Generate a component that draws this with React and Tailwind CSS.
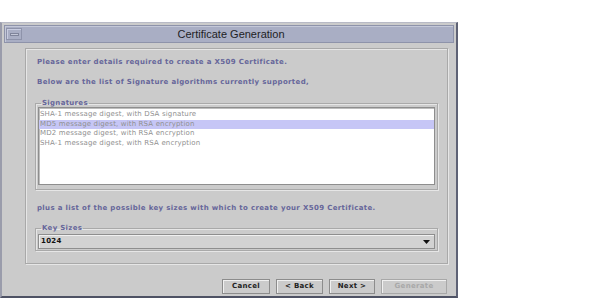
import React from "react";

function Group({ label, children, className }) {
  return (
    <fieldset className={"border border-[#a9a9a9] shadow-[inset_1px_1px_0_#e6e6e6,1px_1px_0_#e6e6e6] px-[2px] pb-[1px] " + className}>
      <legend className="ml-[3px] px-[1px] text-[7px] leading-[8px] font-bold text-[#66669a] tracking-[0.3px]">{label}</legend>
      {children}
    </fieldset>
  );
}

function Btn({ children, disabled, w }) {
  return (
    <div
      className={
        "h-[15px] flex items-center justify-center border border-[#8c8c8c] shadow-[inset_1px_1px_0_#f0f0f0] text-[7px] font-bold tracking-[0.3px] " +
        w +
        (disabled ? " text-[#a8a8a8] border-[#a8a8a8]" : " text-[#222]")
      }
    >
      {children}
    </div>
  );
}

export default function App() {
  const items = [
    "SHA-1 message digest, with DSA signature",
    "MD5 message digest, with RSA encryption",
    "MD2 message digest, with RSA encryption",
    "SHA-1 message digest, with RSA encryption",
  ];
  return (
    <div className="w-[610px] h-[301px] bg-white overflow-hidden font-['DejaVu_Sans',sans-serif]">
      <div className="mt-[22px] w-[458px] h-[276px] bg-[#cbcbcb] border-l-2 border-l-[#9a9cab] border-t border-t-[#b8bac6] border-r-2 border-r-[#5e6275] border-b-2 border-b-[#4e5264] flex flex-col px-[2px] pt-[2px]">
        <div className="relative h-[18px] bg-[#a9aec4] border border-[#8e93aa] shadow-[inset_1px_1px_0_#c4c8d8] flex items-center justify-center">
          <div className="absolute left-[1px] top-[2px] w-[16px] h-[12px] border border-[#8e93aa] shadow-[inset_1px_1px_0_#c8cce0] flex items-center justify-center">
            <div className="w-[9px] h-[3px] bg-[#c4c8d8] border border-[#7f849a]" />
          </div>
          <span className="font-['Liberation_Sans',sans-serif] text-[11px] text-[#1e1e24] pl-[4px]">Certificate Generation</span>
        </div>
        <div className="flex-1 flex flex-col pl-[21px] pr-[6px] pt-[5px]">
          <div className="h-[216px] border border-[#a9a9a9] shadow-[inset_1px_1px_0_#e6e6e6,1px_1px_0_#e6e6e6] flex flex-col px-[9px]">
            <div className="mt-[8px] text-[7px] leading-[10px] font-bold text-[#66669a] tracking-[0.35px] pl-[2px]">
              Please enter details required to create a X509 Certificate.
            </div>
            <div className="mt-[10px] text-[7px] leading-[10px] font-bold text-[#66669a] tracking-[0.35px] pl-[2px]">
              Below are the list of Signature algorithms currently supported,
            </div>
            <Group label="Signatures" className="mt-[12px] h-[91px]">
              <div className="h-[78px] bg-white border border-[#8e8e8e] shadow-[inset_1px_1px_0_#bdbdbd] pt-[2px]">
                {items.map((t, i) => (
                  <div
                    key={i}
                    className={
                      "h-[9.7px] leading-[9.7px] text-[7px] text-[#909090] pl-[1px] tracking-[0.15px] " +
                      (i === 1 ? "bg-[#c6c6f6]" : "")
                    }
                  >
                    {t}
                  </div>
                ))}
              </div>
            </Group>
            <div className="mt-[13px] text-[7px] leading-[10px] font-bold text-[#66669a] tracking-[0.35px] pl-[2px]">
              plus a list of the possible key sizes with which to create your X509 Certificate.
            </div>
            <Group label="Key Sizes" className="mt-[11px] h-[27px] pt-[2px]">
              <div className="h-[15px] bg-[#d2d2d2] border border-[#8e8e8e] shadow-[inset_1px_1px_0_#f0f0f0] flex items-center justify-between pl-[2px] pr-[4px]">
                <span className="text-[7px] font-bold text-[#111] tracking-[0.3px]">1024</span>
                <svg width="7" height="4" viewBox="0 0 7 4">
                  <path d="M0 0h7L3.5 4z" fill="#111" />
                </svg>
              </div>
            </Group>
          </div>
          <div className="mt-[15px] flex justify-end gap-[6px] pr-[1px]">
            <Btn w="w-[48px]">Cancel</Btn>
            <Btn w="w-[47px]">&lt; Back</Btn>
            <Btn w="w-[46px]">Next &gt;</Btn>
            <Btn w="w-[66px]" disabled>Generate</Btn>
          </div>
        </div>
      </div>
    </div>
  );
}
